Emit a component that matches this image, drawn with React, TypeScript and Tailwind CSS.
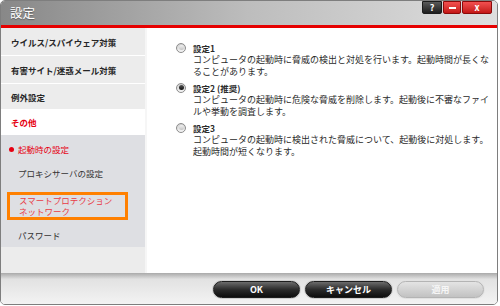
import React from 'react'

const OPTIONS = [
  {
    label: '設定1',
    lines: ['コンピュータの起動時に脅威の検出と対処を行います。起動時間が長くな', 'ることがあります。'],
    checked: false,
  },
  {
    label: '設定2 (推奨)',
    lines: ['コンピュータの起動時に危険な脅威を削除します。起動後に不審なファイ', 'ルや挙動を調査します。'],
    checked: true,
  },
  {
    label: '設定3',
    lines: ['コンピュータの起動時に検出された脅威について、起動後に対処します。', '起動時間が短くなります。'],
    checked: false,
  },
]

function Radio({ checked }: { checked?: boolean }) {
  return (
    <span className="flex h-[10px] w-[10px] shrink-0 items-center justify-center rounded-full border border-[#8c8c8c] bg-gradient-to-b from-[#cfcfcf] to-[#f6f6f6]">
      <span
        className={
          checked
            ? 'h-[5px] w-[5px] rounded-full bg-gradient-to-b from-[#555] to-[#111]'
            : 'h-[5px] w-[5px] rounded-full bg-gradient-to-b from-[#f2f2f2] to-[#c4c4c4]'
        }
      />
    </span>
  )
}

function TopItem({ children, height, active }: { children: React.ReactNode; height: string; active?: boolean }) {
  return (
    <div
      className={
        active
          ? `flex ${height} items-center bg-white pl-[10px] font-bold text-[#e60012]`
          : `flex ${height} items-center bg-[#ececec] pl-[10px] font-bold text-[#262626]`
      }
    >
      {children}
    </div>
  )
}

function FooterButton({ children, disabled }: { children: React.ReactNode; disabled?: boolean }) {
  return (
    <button
      className={
        disabled
          ? 'flex h-[17px] w-[87px] items-center justify-center rounded-full border border-[#b4b4b4] bg-gradient-to-b from-[#e4e4e4] to-[#c2c2c2] text-[9px] font-bold text-[#f6f6f6] shadow-[0_0_0_1px_#e2e2e2]'
          : 'flex h-[17px] w-[87px] items-center justify-center rounded-full border border-[#1e1e1e] bg-gradient-to-b from-[#6c6c6c] via-[#2c2c2c] to-[#0e0e0e] text-[9px] font-bold text-white shadow-[0_0_0_1px_#cfcfcf]'
      }
    >
      {children}
    </button>
  )
}

export default function App() {
  return (
    <div className="h-[306px] w-[500px] bg-white font-['Noto_Sans_CJK_JP','Noto_Sans',sans-serif] text-[8.5px] leading-[12px]">
      <div className="flex h-[305px] w-[498px] flex-col overflow-hidden rounded-[5px] border border-[#7e7e7e] bg-white">
        {/* title bar */}
        <div className="flex h-[24px] items-start justify-between bg-gradient-to-r from-[#888888] via-[#bdbdbd] to-[#dedede]">
          <span className="pl-[9px] pt-[3px] text-[12.5px] leading-[18px] text-white [text-shadow:0_1px_1px_rgba(0,0,0,0.35)]">
            設定
          </span>
          <div className="mr-[5px] flex gap-[1px]">
            <div className="flex h-[13px] w-[20px] items-center justify-center rounded-b-[2px] border border-[#1c1c1c] bg-gradient-to-b from-[#5a5a5a] to-[#1e1e1e] text-[9px] font-bold leading-none text-white">
              ?
            </div>
            <div className="flex h-[13px] w-[18px] items-center justify-center rounded-b-[2px] border border-[#8a0a0a] bg-gradient-to-b from-[#f25050] to-[#c41414]">
              <span className="h-[2px] w-[7px] bg-white" />
            </div>
            <div className="flex h-[13px] w-[30px] items-center justify-center rounded-b-[2px] border border-[#8a0a0a] bg-gradient-to-b from-[#f25050] to-[#c41414] text-[9px] font-bold leading-none text-white">
              x
            </div>
          </div>
        </div>
        <div className="h-[3px] bg-[#e60000]" />

        {/* body */}
        <div className="flex h-[245px]">
          <div className="flex w-[144px] flex-col bg-[#ececec]">
            <TopItem height="h-[27px]">ウイルス/スパイウェア対策</TopItem>
            <div className="h-px bg-white" />
            <TopItem height="h-[27px]">有害サイト/迷惑メール対策</TopItem>
            <div className="h-px bg-white" />
            <TopItem height="h-[25px]">例外設定</TopItem>
            <TopItem height="h-[26px]" active>
              その他
            </TopItem>
            <div className="flex h-[112px] flex-col bg-[#dedfe3] pt-[8px]">
              <div className="flex items-center gap-[4px] pl-[8px] text-[#e60012]">
                <span className="h-[5px] w-[5px] rounded-full bg-[#e60012]" />
                起動時の設定
              </div>
              <div className="mt-[12px] pl-[17px] text-[#333]">プロキシサーバの設定</div>
              <div className="ml-[6px] mt-[13px] h-[28px] w-[121px] border-[3px] border-[#ff8000] pl-[9px] leading-[11px] text-[#e83c46]">
                <div>スマートプロテクション</div>
                <div>ネットワーク</div>
              </div>
              <div className="mt-[9px] pl-[17px] text-[#333]">パスワード</div>
            </div>
          </div>
          <div className="w-[2px] bg-[#f6f6f6]" />
          <div className="flex flex-1 flex-col gap-[3px] bg-white pl-[29px] pt-[13px] text-[9px] text-[#2a2a2a]">
            {OPTIONS.map(opt => (
              <div key={opt.label} className="flex flex-col">
                <div className="flex h-[13px] items-center gap-[7px]">
                  <Radio checked={opt.checked} />
                  <span className="text-[8.5px] font-bold">{opt.label}</span>
                </div>
                <div className="pl-[17px]">
                  {opt.lines.map(line => (
                    <div key={line} className="whitespace-nowrap">
                      {line}
                    </div>
                  ))}
                </div>
              </div>
            ))}
          </div>
        </div>

        {/* footer */}
        <div className="flex h-[31px] items-start justify-end gap-[5px] bg-gradient-to-b from-[#aaaaaa] via-[#e2e2e2] via-20% to-[#f3f3f3] pr-[13px] pt-[8px]">
          <FooterButton>OK</FooterButton>
          <FooterButton>キャンセル</FooterButton>
          <FooterButton disabled>適用</FooterButton>
        </div>
      </div>
    </div>
  )
}
